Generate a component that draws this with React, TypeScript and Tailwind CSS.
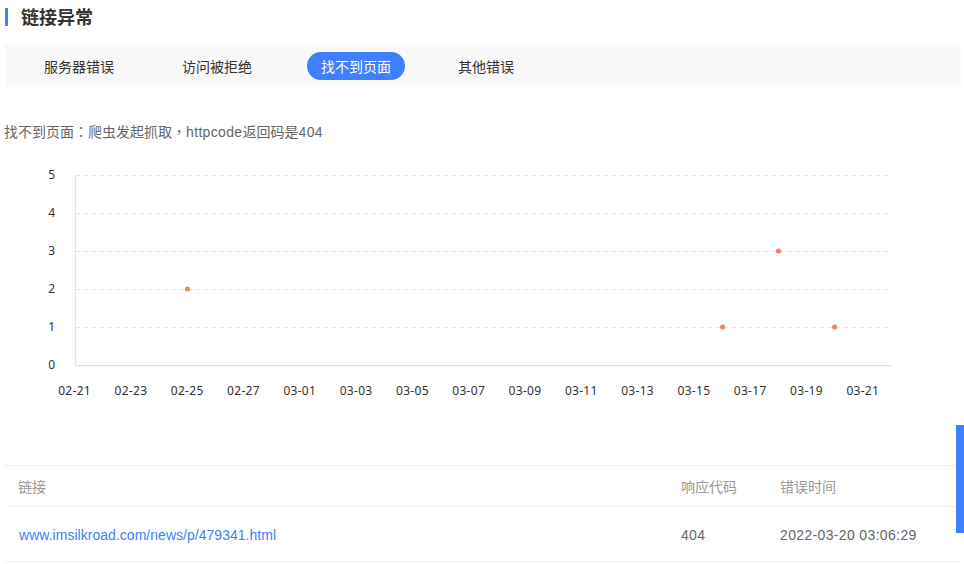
const font = { cn: 'font-["Liberation_Sans","Noto_Sans_CJK_SC",sans-serif]' };

const tabs = ['服务器错误', '访问被拒绝', '找不到页面', '其他错误'];
const yTicks = [5, 4, 3, 2, 1, 0];
const xTicks = ['02-21', '02-23', '02-25', '02-27', '03-01', '03-03', '03-05', '03-07', '03-09', '03-11', '03-13', '03-15', '03-17', '03-19', '03-21'];
const points = [
  [187.5, 289],
  [722.5, 327],
  [778.5, 251],
  [834.5, 327],
];

// 折线图区域，坐标按截图量的
function Chart() {
  return (
    <svg width="964" height="250" viewBox="0 160 964 250" className="block -ml-[5px]">
      {yTicks.map((t) => {
        const y = 365 - t * 38;
        return (
          <g key={t}>
            {t > 0 && <line x1="76" x2="890" y1={y + 0.5} y2={y + 0.5} stroke="#e2e2e2" strokeDasharray="4 4" />}
            <text x="55" y={y + 4} textAnchor="end" fontSize="12" fill="#333" fontFamily="Noto Sans, sans-serif">
              {t}
            </text>
          </g>
        );
      })}
      <line x1="75.5" x2="75.5" y1="175" y2="365" stroke="#e4e4e4" />
      <line x1="75" x2="891" y1="365.5" y2="365.5" stroke="#dcdcdc" />
      {xTicks.map((t, i) => (
        <text key={t} x={74.6 + i * 56.3} y="395" textAnchor="middle" fontSize="12" letterSpacing="0.3" fill="#333" fontFamily="Noto Sans, sans-serif">
          {t}
        </text>
      ))}
      {points.map(([x, y]) => (
        <circle key={x} cx={x} cy={y} r="2.5" fill="#ff7f50" />
      ))}
    </svg>
  );
}

export default function App() {
  return (
    <div className={`relative h-[564px] w-[964px] overflow-hidden bg-white pl-[5px] pr-[3px] ${font.cn}`}>
      <div className="flex h-[45px] items-start pt-[8px]">
        <div className="border-l-[3px] border-[#3f80ff] pt-[2px] pl-[13px] text-lg leading-[16px] font-bold text-[#333]">链接异常</div>
      </div>

      <div className="flex h-[42px] items-center gap-[40px] bg-[#f9f9f9] pl-[25px]">
        {tabs.map((t) => (
          <span
            key={t}
            className={
              t === '找不到页面'
                ? 'translate-x-px rounded-full bg-[#3f80ff] px-[14px] pt-[2px] text-sm leading-[26px] text-white'
                : 'px-[14px] pt-[2px] text-sm leading-[26px] text-[#333]'
            }
          >
            {t}
          </span>
        ))}
      </div>

      <p className="mt-[34px] -ml-px h-[21px] text-sm leading-[20px] text-[#666]">
        <span className="font-['Noto_Sans_CJK_TC']">找不到页面：爬虫发起抓取，</span>
        <span className="tracking-[0.35px]">httpcode</span>返回码是<span className="tracking-[0.35px]">404</span>
      </p>

      <div className="mt-[18px]">
        <Chart />
      </div>

      <div className="mt-[55px] text-sm">
        <div className="grid h-[42px] grid-cols-[663px_99px_1fr] items-center border-y border-[#eeeeee] pt-px pl-[13px] text-[#999]">
          <span>链接</span>
          <span>响应代码</span>
          <span>错误时间</span>
        </div>
        <div className="grid h-[55px] grid-cols-[663px_99px_1fr] items-center border-b border-[#eeeeee] pt-px pl-[13px] text-[#666]">
          <a className="pl-px tracking-[0.03px] text-[#3f80ff]">www.imsilkroad.com/news/p/479341.html</a>
          <span className="tracking-[0.3px]">404</span>
          <span className="tracking-[0.35px]">2022-03-20 03:06:29</span>
        </div>
      </div>

      <div className="absolute top-[425px] right-0 h-[108px] w-[8px] bg-[#3f80ff]" />
    </div>
  );
}
